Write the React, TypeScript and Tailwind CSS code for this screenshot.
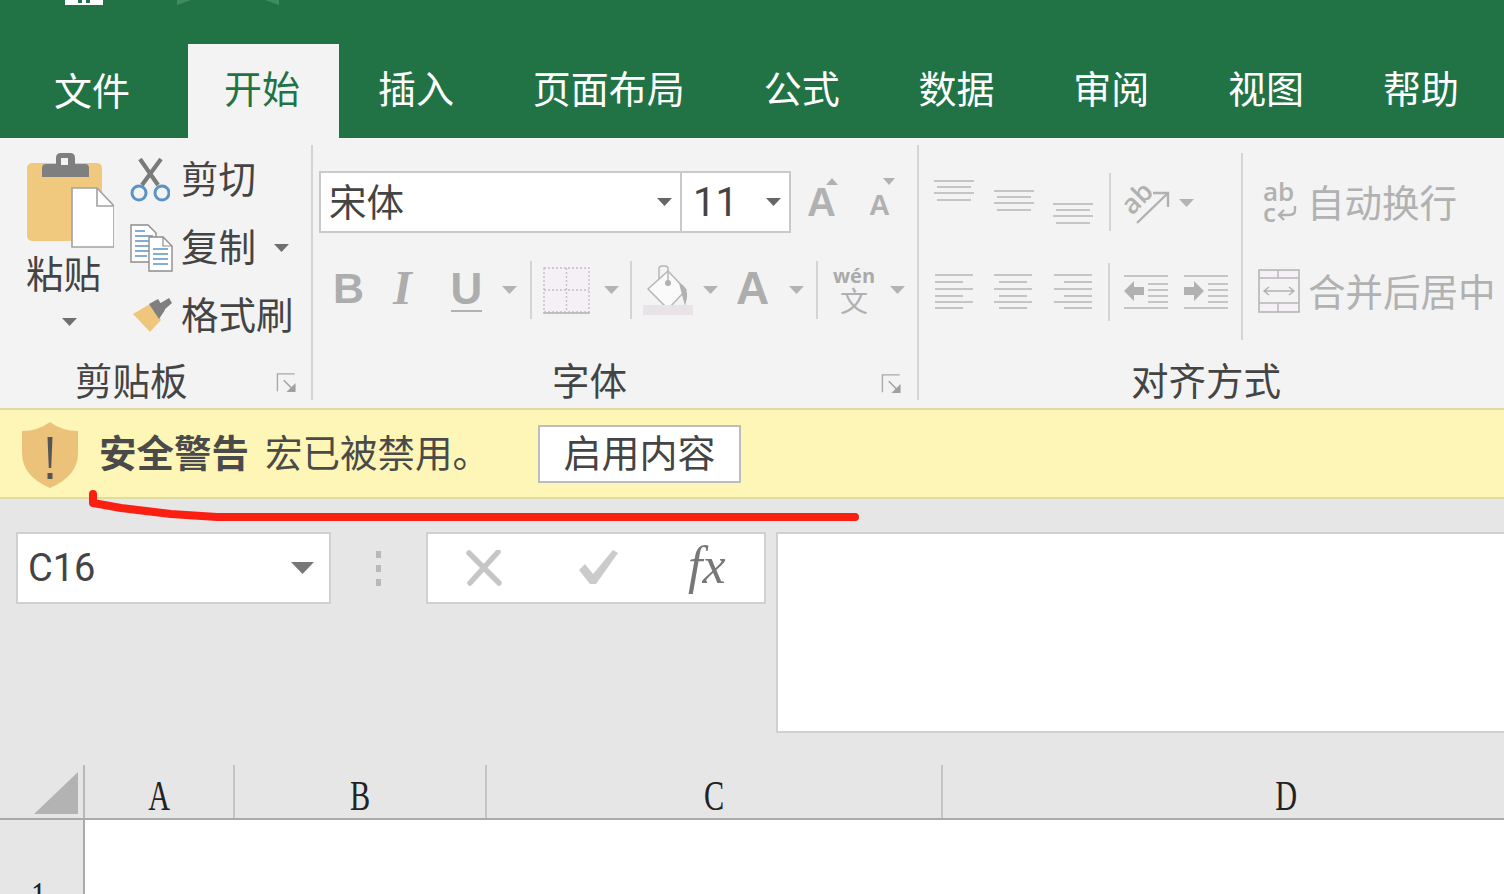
const cjk = "font-['Noto_Sans_CJK_SC','Noto_Sans',sans-serif]";
const label = 'text-[37.5px] leading-none text-[#444] mb-[6px] whitespace-nowrap';

function Caret({ c = '#b3b3b3', w = 15, h = 8, className = '' }: { c?: string; w?: number; h?: number; className?: string }) {
  return (
    <svg width={w} height={h} viewBox="0 0 15 8" preserveAspectRatio="none" className={'shrink-0 ' + className}>
      <polygon points="0,0 15,0 7.5,8" fill={c} />
    </svg>
  );
}

function Sep({ className }: { className: string }) {
  return <div className={'w-[2px] bg-[#d4d4d4] shrink-0 ' + className} />;
}

function Launcher() {
  return (
    <svg width="21" height="20" viewBox="0 0 22 22" className="shrink-0">
      <path d="M1 20V1h19" fill="none" stroke="#a8a8a8" strokeWidth="1.5" />
      <path d="M8 8l9 9" stroke="#a0a0a0" strokeWidth="1.6" />
      <polygon points="21,11 21,21 11,21" fill="#a0a0a0" />
    </svg>
  );
}

function PasteIcon() {
  return (
    <svg width="88" height="95" viewBox="0 0 88 95" className="shrink-0">
      <rect x="1" y="10" width="75" height="78" rx="5" fill="#f0c97f" />
      <path d="M16 24v-9q0-4 4-4h10v-6q0-5 5-5h9q5 0 5 5v6h10q4 0 4 4v9z" fill="#7f7f7f" />
      <rect x="35" y="5" width="7" height="7" fill="#f3f3f3" />
      <path d="M46 35h25l17 18v41H46z" fill="#fff" stroke="#a2a2a2" strokeWidth="1.6" />
      <path d="M71 35v18h17" fill="none" stroke="#a2a2a2" strokeWidth="1.6" />
    </svg>
  );
}

function CutIcon() {
  return (
    <svg width="40" height="44" viewBox="0 0 40 44" className="shrink-0">
      <path d="M10 1l18 26M31 1L12 27" stroke="#7a7a7a" strokeWidth="4.2" fill="none" />
      <circle cx="9" cy="35" r="7" fill="none" stroke="#5b93c7" strokeWidth="3" />
      <circle cx="32" cy="35" r="7" fill="none" stroke="#5b93c7" strokeWidth="3" />
    </svg>
  );
}

function CopyIcon() {
  return (
    <svg width="43" height="48" viewBox="0 0 43 48" className="shrink-0">
      <path d="M1 1h17l8 8v29H1z" fill="#fff" stroke="#8d8d8d" strokeWidth="1.4" />
      <path d="M5 7h10M5 12h18M5 17h18M5 22h18M5 27h18M5 32h12" stroke="#5b93c7" strokeWidth="1.5" />
      <path d="M19 13h14l9 9v25H19z" fill="#fff" stroke="#8d8d8d" strokeWidth="1.4" />
      <path d="M33 13v9h9" fill="none" stroke="#8d8d8d" strokeWidth="1.2" />
      <path d="M23 25h15M23 30h15M23 35h15M23 40h15" stroke="#5b93c7" strokeWidth="1.6" />
    </svg>
  );
}

function BrushIcon() {
  return (
    <svg width="40" height="36" viewBox="0 0 40 36" className="shrink-0">
      <polygon points="1,16 18,6 29,22 18,34" fill="#efc77c" />
      <polygon points="17,6 26,1 33,12 27,21" fill="#7f7f7f" />
      <polygon points="27,6 37,0 40,5 32,12" fill="#7f7f7f" />
    </svg>
  );
}

function Lines({ w, h, rows }: { w: number; h: number; rows: [number, number, number][] }) {
  return (
    <svg width={w} height={h} viewBox={`0 0 ${w} ${h}`} className="shrink-0">
      {rows.map(([x1, x2, y], i) => (
        <line key={i} x1={x1} x2={x2} y1={y} y2={y} stroke="#b6b6b6" strokeWidth="1.6" />
      ))}
    </svg>
  );
}

const top3: [number, number, number][] = [[0, 40, 1], [3, 37, 7], [0, 40, 13], [3, 37, 20]];
const left5: [number, number, number][] = [[0, 38, 1], [0, 28, 8], [0, 38, 15], [0, 28, 22], [0, 38, 28], [0, 28, 34]];
const center5: [number, number, number][] = [[0, 38, 1], [5, 33, 8], [0, 38, 15], [5, 33, 22], [0, 38, 28], [5, 33, 34]];
const right5: [number, number, number][] = [[0, 38, 1], [10, 38, 8], [0, 38, 15], [10, 38, 22], [0, 38, 28], [10, 38, 34]];

function IndentIcon({ right }: { right?: boolean }) {
  return (
    <svg width="44" height="34" viewBox="0 0 44 34" className="shrink-0">
      <path d="M0 1h44M0 33h44M24 9h20M24 15h20M24 21h20M24 27h20" stroke="#b6b6b6" strokeWidth="1.6" />
      {right ? (
        <polygon points="0,12 10,12 10,6 20,16 10,26 10,20 0,20" fill="#b1b1b1" />
      ) : (
        <polygon points="20,12 10,12 10,6 0,16 10,26 10,20 20,20" fill="#b1b1b1" />
      )}
    </svg>
  );
}

function Clipboard() {
  return (
    <div className="w-[311px] shrink-0 flex flex-col h-full">
      <div className="flex pl-[26px] h-[212px]">
        <div className="flex flex-col w-[104px] shrink-0 pt-[15px]">
          <PasteIcon />
          <span className="text-[37.5px] leading-[40px] mt-[4px] text-[#444]">粘贴</span>
          <Caret c="#6f6f6f" className="ml-[36px] mt-[26px]" />
        </div>
        <div className="flex flex-col pt-[8px]">
          <div className="h-[68px] flex items-center">
            <div className="w-[51px]"><CutIcon /></div>
            <span className={label}>剪切</span>
          </div>
          <div className="h-[68px] flex items-center">
            <div className="w-[51px]"><CopyIcon /></div>
            <span className={label}>复制</span>
            <Caret c="#6f6f6f" className="ml-[18px]" />
          </div>
          <div className="h-[68px] flex items-center">
            <div className="w-[51px] pl-[2px]"><BrushIcon /></div>
            <span className={label}>格式刷</span>
          </div>
        </div>
      </div>
      <div className="flex items-center h-[44px] mt-[8px]">
        <span className="ml-[75px] text-[37.5px] leading-none text-[#444] mb-[2px]">剪贴板</span>
        <div className="ml-[88px] mt-[6px]"><Launcher /></div>
      </div>
    </div>
  );
}

function FontGroup() {
  return (
    <div className="w-[604px] shrink-0 flex flex-col h-full">
      <div className="flex items-center pt-[33px] pl-[6px]">
        <div className="w-[363px] h-[62px] bg-white border-2 border-[#c9c9c9] flex items-center pl-[8px] pr-[8px] justify-between shrink-0">
          <span className="text-[37.5px] leading-none text-[#444] mb-[4px]">宋体</span>
          <Caret c="#666" />
        </div>
        <div className="w-[109px] h-[62px] bg-white border-2 border-l-0 border-[#c9c9c9] flex items-center pl-[11px] pr-[8px] justify-between shrink-0">
          <span className="text-[40px] leading-none text-[#444] font-['Roboto',sans-serif] mt-[2px]">11</span>
          <Caret c="#666" />
        </div>
        <div className="flex items-end h-[42px] mb-[6px] ml-[16px] relative shrink-0 w-[84px] font-['Liberation_Sans',sans-serif] font-bold text-[#b1b1b1]">
          <span className="text-[40px] leading-[36px]">A</span>
          <span className="text-[29px] leading-[30px] ml-[33px]">A</span>
          <svg width="12" height="7" viewBox="0 0 12 7" className="absolute left-[19px] top-0"><polygon points="0,7 12,7 6,0" fill="#b1b1b1" /></svg>
          <svg width="12" height="7" viewBox="0 0 12 7" className="absolute left-[76px] top-0"><polygon points="0,0 12,0 6,7" fill="#b1b1b1" /></svg>
        </div>
      </div>
      <div className="flex items-center h-[58px] mt-[28px] pl-[20px] text-[#adadad] font-['Liberation_Sans',sans-serif]">
        <span className="font-bold text-[43px] leading-none w-[60px] shrink-0 mb-[4px]">B</span>
        <span className="italic font-bold text-[48px] leading-none w-[58px] shrink-0 mb-[4px] font-['Liberation_Serif',serif]">I</span>
        <span className="font-bold text-[44px] leading-[42px] border-b-2 border-[#b1b1b1] w-[31px] shrink-0 flex justify-center">U</span>
        <Caret className="ml-[20px]" />
        <Sep className="h-[58px] ml-[13px]" />
        <svg width="47" height="47" viewBox="0 0 47 47" className="ml-[11px] shrink-0">
          <rect x="1" y="1" width="45" height="44" fill="#f5f0f6" />
          <path d="M1 1h45v44H1zM23.5 1v44M1 23h45" fill="none" stroke="#c4bfc6" strokeWidth="1.4" strokeDasharray="2 2" />
          <path d="M0 46h47" stroke="#b1b1b1" strokeWidth="1.6" />
        </svg>
        <Caret className="ml-[14px]" />
        <Sep className="h-[58px] ml-[11px]" />
        <svg width="50" height="50" viewBox="0 0 50 50" className="ml-[11px] shrink-0">
          <path d="M5 24L25 6l18 19-18 19z" fill="#fbfafb" stroke="#b6b6b6" strokeWidth="1.5" />
          <path d="M16 14V4q0-3 3-3h3q3 0 3 3v14" fill="none" stroke="#b6b6b6" strokeWidth="1.5" />
          <circle cx="25" cy="18" r="3" fill="#b1b1b1" />
          <path d="M36 18q9 3 8 15l-2 8-4-15z" fill="#b1b1b1" />
          <rect x="0" y="40" width="50" height="10" fill="#e7e3e7" />
        </svg>
        <Caret className="ml-[10px]" />
        <span className="font-bold text-[46px] leading-none ml-[18px] w-[33px] shrink-0 mb-[4px]">A</span>
        <Caret className="ml-[20px]" />
        <Sep className="h-[58px] ml-[12px]" />
        <div className="ml-[15px] w-[42px] shrink-0 flex flex-col items-center">
          <span className="font-bold text-[20px] leading-[20px] font-['Open_Sans',sans-serif] text-[#aaa]">wén</span>
          <span className={"text-[28px] leading-[28px] text-[#b1b1b1] " + cjk}>文</span>
        </div>
        <Caret className="ml-[15px]" />
      </div>
      <div className="flex items-center h-[44px] mt-[41px]">
        <span className="ml-[239px] text-[37.5px] leading-none text-[#444] mb-[6px]">字体</span>
        <div className="ml-[254px] mt-[4px]"><Launcher /></div>
      </div>
    </div>
  );
}

function AlignGroup() {
  return (
    <div className="flex-1 min-w-0 flex flex-col h-full">
      <div className="flex h-[202px] pt-[15px]">
        <div className="w-[322px] shrink-0 flex flex-col pl-[15px]">
          <div className="flex items-start h-[58px] mt-[20px]">
            <div className="mt-[7px]"><Lines w={40} h={22} rows={top3} /></div>
            <div className="ml-[20px] mt-[17px]"><Lines w={40} h={22} rows={top3} /></div>
            <div className="ml-[19px] mt-[30px]"><Lines w={40} h={22} rows={top3} /></div>
            <Sep className="h-[58px] ml-[16px]" />
            <svg width="46" height="44" viewBox="0 0 46 44" className="ml-[13px] mt-[10px] shrink-0 overflow-visible" fill="none" stroke="#b1b1b1" strokeWidth="2.4">
              <path d="M13 40L44 10M29 10h15v14" />
              <text x="8" y="33" fontSize="27" fontWeight="600" fill="#b1b1b1" stroke="none" transform="rotate(-45 8 33)" fontFamily="Open Sans">ab</text>
            </svg>
            <Caret className="ml-[9px] mt-[26px]" />
          </div>
          <div className="flex items-center h-[58px] mt-[32px] pl-[1px]">
            <Lines w={38} h={36} rows={left5} />
            <div className="ml-[21px]"><Lines w={38} h={36} rows={center5} /></div>
            <div className="ml-[22px]"><Lines w={38} h={36} rows={right5} /></div>
            <Sep className="h-[58px] ml-[16px]" />
            <div className="ml-[14px]"><IndentIcon /></div>
            <div className="ml-[16px]"><IndentIcon right /></div>
          </div>
        </div>
        <div className="w-[2px] h-[187px] bg-[#d4d4d4] shrink-0" />
        <div className="flex flex-col pl-[15px] whitespace-nowrap text-[37.5px] leading-none text-[#b1b1b1]">
          <div className="flex items-center h-[44px] mt-[28px]">
            <div className="w-[49px] h-[44px] shrink-0 flex flex-col pl-[5px] font-['Open_Sans',sans-serif] font-semibold text-[26px] leading-[21px] text-[#b1b1b1]">
              <span>ab</span>
              <span className="flex items-center">
                c
                <svg width="20" height="16" viewBox="0 0 20 16" className="ml-[1px]" fill="none" stroke="#b1b1b1" strokeWidth="2.4">
                  <path d="M2 10h10q6 0 6-5V1M7 5l-5 5 5 5" />
                </svg>
              </span>
            </div>
            <span className="mb-[4px]">自动换行</span>
          </div>
          <div className="flex items-center h-[46px] mt-[45px]">
            <svg width="42" height="44" viewBox="0 0 42 44" className="shrink-0 mr-[8px] mb-[4px]">
              <rect x="1" y="1" width="40" height="42" fill="#f5f0f6" stroke="#b6b6b6" strokeWidth="1.6" />
              <path d="M1 9h40M1 34h40M20 1v8M20 34v9" stroke="#b6b6b6" strokeWidth="1.4" />
              <rect x="2" y="10" width="38" height="23" fill="#f3f3f3" />
              <path d="M6 22h30M11 18l-5 4 5 4M31 18l5 4-5 4" fill="none" stroke="#b1b1b1" strokeWidth="1.4" />
            </svg>
            <span className="mb-[6px]">合并后居中</span>
          </div>
        </div>
      </div>
      <div className="flex items-center h-[44px] mt-[20px]">
        <span className="ml-[212px] text-[37.5px] leading-none text-[#444] mb-[6px]">对齐方式</span>
      </div>
    </div>
  );
}

const tabs = ['插入', '页面布局', '公式', '数据', '审阅', '视图', '帮助'];
const columns: [string, string][] = [['A', 'w-[150px]'], ['B', 'w-[252px]'], ['C', 'w-[456px]'], ['D', 'w-[686px]']];

export default function App() {
  return (
    <div className={"w-[1504px] h-[894px] overflow-hidden relative bg-white " + cjk}>
      {/* Title bar and tabs */}
      <header className="bg-[#217346] h-[138px] flex flex-col">
        <div className="h-[44px] flex items-start pl-[65px] overflow-hidden shrink-0">
          <svg width="38" height="5" viewBox="0 0 38 5" className="shrink-0">
            <rect width="38" height="5" fill="#fff" />
            <rect x="13" width="4" height="3" fill="#217346" />
            <rect x="21" width="4" height="3" fill="#217346" />
          </svg>
          <svg width="14" height="5" viewBox="0 0 14 5" className="ml-[74px] shrink-0"><path d="M0 5L14 0H0z" fill="#3f8a60" /></svg>
          <svg width="14" height="5" viewBox="0 0 14 5" className="ml-[74px] shrink-0"><path d="M14 5L0 0h14z" fill="#3f8a60" /></svg>
        </div>
        <nav className="flex h-[94px] text-[38px] leading-none text-white">
          <div className="w-[188px] flex items-center pl-[54px] shrink-0"><span className="mb-[4px]">文件</span></div>
          <div className="w-[151px] bg-[#f3f3f3] text-[#217346] flex items-center justify-center shrink-0 pr-[3px]"><span className="mb-[8px]">开始</span></div>
          <div className="flex items-center pl-[39px] gap-[78.8px] pb-[8px]">
            {tabs.map((t) => (
              <span key={t} className="whitespace-nowrap">{t}</span>
            ))}
          </div>
        </nav>
      </header>

      {/* Ribbon */}
      <section className="h-[270px] bg-[#f3f3f3] flex items-start">
        <Clipboard />
        <Sep className="h-[255px] mt-[7px]" />
        <FontGroup />
        <Sep className="h-[255px] mt-[7px]" />
        <AlignGroup />
      </section>

      {/* Security warning */}
      <section className="h-[91px] bg-[#fdf6b6] border-y-2 border-[#dedca0] flex items-center pl-[22px]">
        <svg width="56" height="66" viewBox="0 0 56 66" className="shrink-0 mt-[2px]">
          <path d="M28 0q12 9 28 9v22q0 23-28 35Q0 54 0 31V9Q16 9 28 0z" fill="#ecc27a" />
          <polygon points="25.5,15 30.5,15 29.2,46 26.8,46" fill="#555" />
          <rect x="25.5" y="51" width="5" height="6" fill="#555" />
        </svg>
        <span className="ml-[21px] font-bold text-[37.5px] leading-none text-[#4a4a4a] whitespace-nowrap mb-[6px]">安全警告</span>
        <span className="ml-[16px] text-[37.5px] leading-none text-[#4a4a4a] whitespace-nowrap w-[273px] shrink-0 mb-[6px]">宏已被禁用。</span>
        <button className="w-[203px] h-[58px] bg-white border-2 border-[#bdbdbd] text-[38px] leading-none text-[#444] shrink-0 pb-[6px]">启用内容</button>
      </section>

      {/* Formula bar */}
      <section className="h-[266px] bg-[#e6e6e6] flex items-start pt-[33px] pl-[16px]">
        <div className="w-[315px] h-[72px] bg-white border-2 border-[#d0d0d0] flex items-center pl-[10px] pr-[15px] justify-between shrink-0">
          <span className="text-[38px] leading-none text-[#444] font-['Roboto',sans-serif]">C16</span>
          <Caret c="#777" w={23} h={12} />
        </div>
        <div className="w-[95px] h-[72px] flex flex-col items-center justify-center gap-[7px] shrink-0">
          <i className="block w-[5px] h-[7px] bg-[#b9b9b9]" />
          <i className="block w-[5px] h-[7px] bg-[#b9b9b9]" />
          <i className="block w-[5px] h-[7px] bg-[#b9b9b9]" />
        </div>
        <div className="w-[340px] h-[72px] bg-white border-2 border-[#d0d0d0] flex items-center pl-[38px] shrink-0">
          <svg width="36" height="36" viewBox="0 0 36 36" className="shrink-0">
            <path d="M3 3l30 30M32 2L4 33" stroke="#c6c6c6" strokeWidth="5.5" strokeLinecap="round" />
          </svg>
          <svg width="42" height="36" viewBox="0 0 42 36" className="ml-[76px] shrink-0">
            <polygon points="1,20 7,14 15,24 35,0 40,3 18,34 12,34" fill="#cbcbcb" />
          </svg>
          <span className="ml-[68px] italic text-[52px] leading-none text-[#777] font-['Liberation_Serif',serif] whitespace-nowrap mb-[4px]">fx</span>
        </div>
        <div className="flex-1 ml-[10px] h-[201px] bg-white border-2 border-r-0 border-[#d0d0d0]" />
      </section>

      {/* Column header */}
      <section className="h-[55px] bg-[#e6e6e6] flex overflow-hidden border-b-2 border-[#aaaaaa] font-['Liberation_Serif',serif] text-[42px] leading-none text-[#222]">
        <div className="w-[85px] shrink-0 border-r-2 border-[#b8b8b8] flex items-start justify-end pr-[5px] pt-[7px]">
          <svg width="44" height="42" viewBox="0 0 44 42"><polygon points="44,0 44,42 0,42" fill="#b3b3b3" /></svg>
        </div>
        {columns.map(([l, w]) => (
          <div key={l} className={"shrink-0 border-r-2 border-[#c4c4c4] last:border-r-0 flex items-end justify-center pb-[1px] " + w}>
            <span className="inline-block scale-x-[0.72]">{l}</span>
          </div>
        ))}
      </section>

      {/* First row */}
      <section className="flex h-[74px]">
        <div className="w-[85px] shrink-0 bg-[#e6e6e6] border-r-2 border-[#aaaaaa] flex justify-center pr-[7px] pt-[56px] font-['Liberation_Serif',serif] text-[42px] leading-none text-[#222]">
          <span className="inline-block scale-x-[0.72]">1</span>
        </div>
        <div className="flex-1 bg-white" />
      </section>

      {/* Red hand-drawn underline */}
      <svg width="780" height="40" viewBox="0 0 780 40" className="absolute left-[85px] top-[487px] pointer-events-none">
        <path d="M8 7v9l28 5 50 6 46 3h638" fill="none" stroke="#fb1f12" strokeWidth="8" strokeLinecap="round" strokeLinejoin="round" />
      </svg>
    </div>
  );
}
